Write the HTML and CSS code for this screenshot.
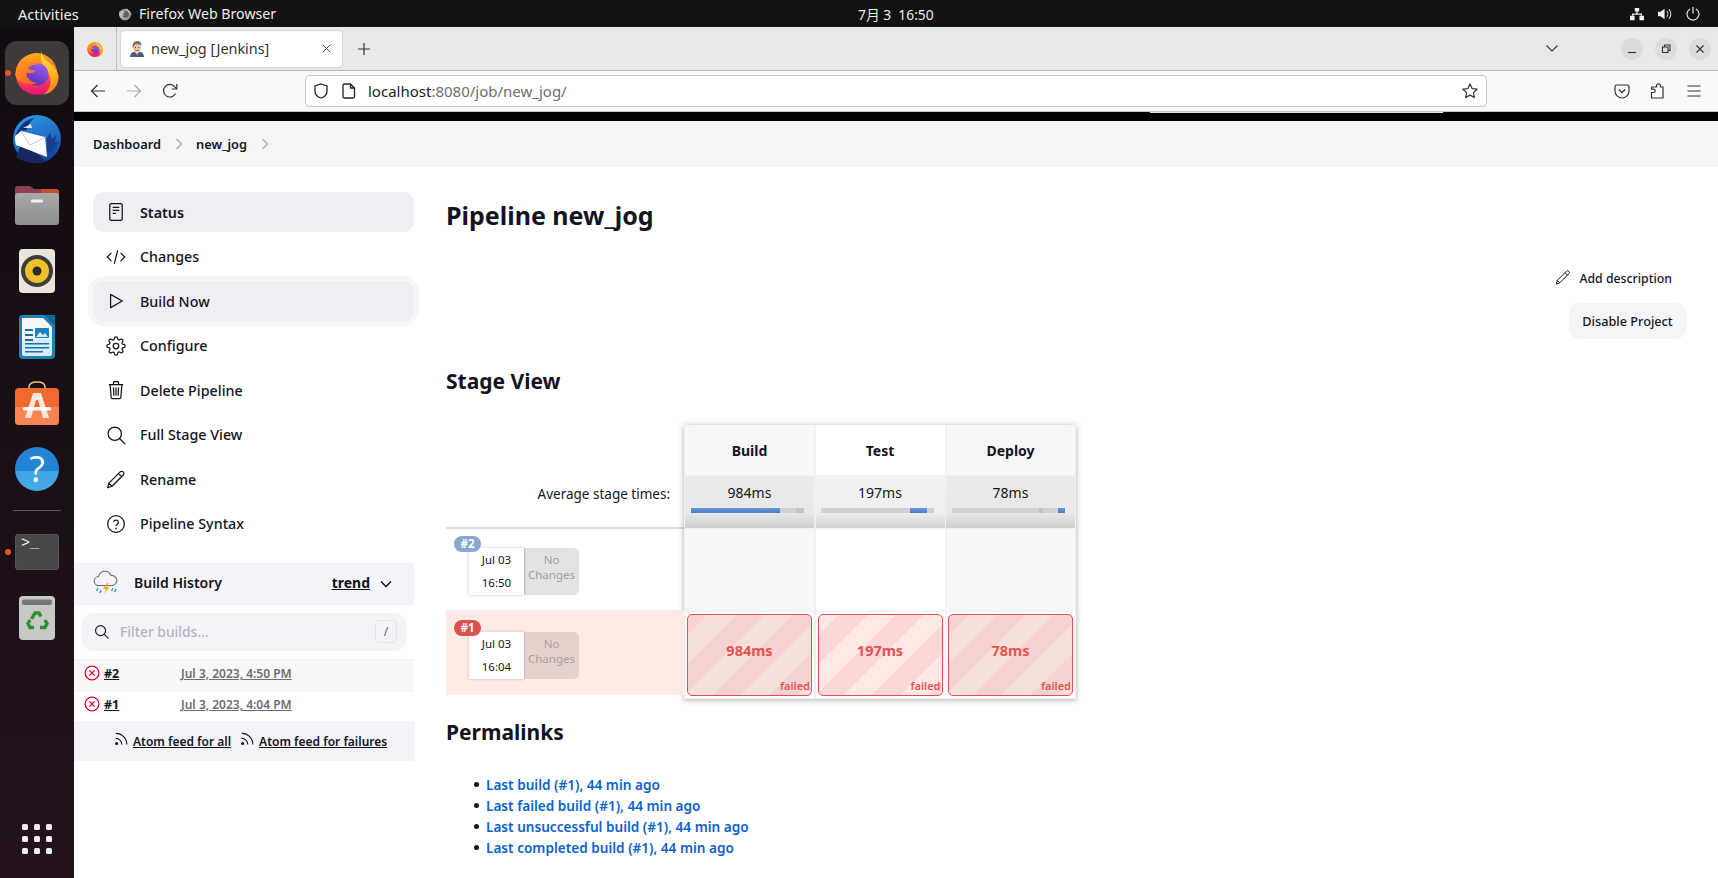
FILE: index.html
```html
<!DOCTYPE html>
<html lang="en">
<head>
<meta charset="utf-8">
<title>new_jog [Jenkins]</title>
<link rel="stylesheet" href="styles.css">
</head>
<body>
<svg class="defs" width="0" height="0" aria-hidden="true">
  <defs>
    <linearGradient id="ffBase" x1="0.45" y1="0" x2="0.55" y2="1">
      <stop offset="0" stop-color="#ffb01f"/><stop offset="0.45" stop-color="#ff6a2a"/><stop offset="0.75" stop-color="#f7305c"/><stop offset="1" stop-color="#e3127f"/>
    </linearGradient>
    <linearGradient id="ffGlobe" x1="0.7" y1="0" x2="0.3" y2="1"><stop offset="0" stop-color="#9a5cf0"/><stop offset="1" stop-color="#5a2fb8"/></linearGradient>
    <linearGradient id="ffTail" x1="0.3" y1="0" x2="0.6" y2="1"><stop offset="0" stop-color="#ffe03c"/><stop offset="0.6" stop-color="#ffb31f"/><stop offset="1" stop-color="#ff7a1f"/></linearGradient>
    <linearGradient id="ffHead" x1="0" y1="0" x2="0.6" y2="1"><stop offset="0" stop-color="#ffa21f"/><stop offset="1" stop-color="#ff6426"/></linearGradient>
    <linearGradient id="tbBlue" x1="0.3" y1="0" x2="0.7" y2="1"><stop offset="0" stop-color="#2a96e2"/><stop offset="0.65" stop-color="#1f62bf"/><stop offset="1" stop-color="#173a93"/></linearGradient>
    <linearGradient id="filesBody" x1="0" y1="0" x2="0" y2="1"><stop offset="0" stop-color="#a9a9a9"/><stop offset="1" stop-color="#8e8e8e"/></linearGradient>
    <symbol id="firefox" viewBox="0 0 48 48">
      <circle cx="23.500" cy="25" r="22.700" fill="url(#ffBase)"/>
      <path d="M29 0c0 6 4 10 9 13 6 5 10 11 9.500 17-1 10-9 17-17.500 17.500 8-3.500 11-13.500 7-22.500-3-7-11-11-8-25z" fill="url(#ffTail)"/>
      <circle cx="24.500" cy="25.500" r="12" fill="url(#ffGlobe)"/>
      <path d="M.8 24c0-6 2.700-12 7.700-16-.8 3 0 5 1.500 6.500 4-3.500 10-3 14 .5-4.500-.5-9 .5-11 3 2 2.500 6 3.500 10 3-3 3.500-7.500 4-11.500 2 .5 6 5.500 11 13 12.500-12 2-24-1-24.500-11.500z" fill="url(#ffHead)"/>
    </symbol>
    <symbol id="rss" viewBox="0 0 14 14">
      <circle cx="2.600" cy="11.400" r="1.500" fill="#14141f"/>
      <path d="M1.500 6.200a6.300 6.300 0 0 1 6.300 6.300M1.800 1.400a11 11 0 0 1 11 11.200" fill="none" stroke="#14141f" stroke-width="1.100"/>
    </symbol>
    <symbol id="err" viewBox="0 0 16 16">
      <circle cx="8" cy="8" r="6.900" fill="none" stroke="#e6001f" stroke-width="1.300"/>
      <path d="M5.400 5.400l5.200 5.200M10.600 5.400l-5.200 5.200" stroke="#e6001f" stroke-width="1.300" fill="none"/>
    </symbol>
  </defs>
</svg>

<header class="topbar">
  <span class="activities">Activities</span>
  <span class="appmenu">
    <svg class="ff-dim" viewBox="0 0 48 48"><circle cx="24" cy="26" r="20" fill="#9a9a9a"/><path d="M30 1c0 6 4 9 9 13 5 5 8 11 7 17-2-6-6-10-10-12-4-3-8-8-6-18z" fill="#c8c8c8"/><circle cx="26" cy="25" r="11" fill="#5c5c5c"/><path d="M4 24c0-5 1-9 3-12l2 5c2-4 6-5 9-5l-3 4c3-1 9 0 12 3-5 0-9 1-10 4 0 2 3 4 6 4-2 3-7 3-10 1 1 5 5 9 12 10-10 2-21-4-21-14z" fill="#bdbdbd"/></svg>
    <span class="appname">Firefox Web Browser</span>
  </span>
  <span class="clock">7月 3&nbsp;&nbsp;16:50</span>
  <span class="tray">
    <svg class="tray-ic" viewBox="0 0 16 14"><path d="M5.500 0h5v4.200h-5zM7.300 4.200h1.400v2.300h5v2.200h-1.400V7.900H3.700v.8H2.300V6.500h5zM0 9h5.200v5H0zM10.800 9H16v5h-5.200z" fill="#f2f2f2"/></svg>
    <svg class="tray-ic" viewBox="0 0 16 14"><path d="M0 4.500h3L7.500 1v12L3 9.500H0z" fill="#f2f2f2"/><path d="M10 3.800a4.600 4.600 0 0 1 0 6.400M12.600 1.800a7.600 7.600 0 0 1 0 10.400" fill="none" stroke="#d8d8d8" stroke-width="1.200"/></svg>
    <svg class="tray-ic" viewBox="0 0 14 14"><path d="M7 0v6.500M4 1.900a6 6 0 1 0 6 0" fill="none" stroke="#e8e8e8" stroke-width="1.200"/></svg>
  </span>
</header>

<div class="below">
  <nav class="dock">
    <div class="slot"><span class="tile"></span><span class="run-dot"></span>
      <svg class="ic-firefox"><use href="#firefox"/></svg></div>
    <div class="slot">
      <svg class="ic-48" viewBox="0 0 48 48">
        <circle cx="24" cy="24" r="24" fill="url(#tbBlue)"/>
        <path d="M3 42c8 6 20 7 29 4l-6-6L8 30z" fill="#16265f"/>
        <path d="M34 42l4-7 1 4 3-8 1 4 2-9-3 2 1-8-4 4-2-6-3 5z" fill="#14408f"/>
        <path d="M2 22C5 12 12 4 22 3c-5 3-8 8-8 12l-6 1-3 10z" fill="#11317d"/>
        <path d="M8 16l24 6 2 20L3 30c-1-3-1-6-1-9z" fill="#fff"/>
        <path d="M8 17l9 13 16-8" fill="none" stroke="#a7b4c6" stroke-width="0.800"/>
        <path d="M10 13l8-4 1 4z" fill="#dfe9f5"/>
        <circle cx="13" cy="14" r="1.300" fill="#26304a"/>
      </svg></div>
    <div class="slot">
      <svg class="ic-files" viewBox="0 0 44 40">
        <path d="M0 4a3 3 0 0 1 3-3h12l4 3h22a3 3 0 0 1 3 3v8H0z" fill="#8f3f55"/>
        <path d="M26 4h15a3 3 0 0 1 3 3v6H26z" fill="#c4532c"/>
        <rect y="8" width="44" height="32" rx="3" fill="url(#filesBody)"/>
        <rect x="16" y="14.500" width="12" height="3" rx="1" fill="#f2f2f2"/>
      </svg></div>
    <div class="slot">
      <svg class="ic-36" viewBox="0 0 36 44">
        <rect width="36" height="44" rx="4" fill="#e9e5da"/>
        <circle cx="18" cy="22" r="16" fill="#3f3d3c"/>
        <circle cx="18" cy="22" r="12" fill="#efc02a"/>
        <circle cx="18" cy="22" r="4.500" fill="#2b2a29"/>
      </svg></div>
    <div class="slot">
      <svg class="ic-36" viewBox="0 0 36 44">
        <path d="M4 0h22l10 10v30a4 4 0 0 1-4 4H4a4 4 0 0 1-4-4V4a4 4 0 0 1 4-4z" fill="#1a82b8"/>
        <path d="M3 3h21l9 9v12H3z" fill="#f5f5f5"/>
        <path d="M3 24h30v15a2 2 0 0 1-2 2H5a2 2 0 0 1-2-2z" fill="#d9ecf6"/>
        <path d="M26 0l10 10V0z" fill="#0f6a9a"/>
        <rect x="6" y="14" width="8" height="2" fill="#1672a8"/><rect x="6" y="19" width="8" height="2" fill="#1672a8"/><rect x="6" y="24" width="8" height="2" fill="#1672a8"/>
        <rect x="16" y="13" width="14" height="10" rx="1" fill="#1a82c4"/>
        <path d="M17 22l4-5 3 3 2-2 3 4z" fill="#d7ecf7"/>
        <rect x="6" y="28" width="24" height="1.500" fill="#1672a8"/><rect x="6" y="32" width="24" height="1.500" fill="#1672a8"/><rect x="6" y="36" width="18" height="1.500" fill="#1672a8"/>
      </svg></div>
    <div class="slot">
      <svg class="ic-software" viewBox="0 0 44 44">
        <path d="M14 9V6c0-3 3-5 8-5s8 2 8 5v3" fill="none" stroke="#e8c68a" stroke-width="1.500"/>
        <rect y="7" width="44" height="37" rx="4" fill="#f3682e"/>
        <path d="M0 26h44v14a4 4 0 0 1-4 4H4a4 4 0 0 1-4-4z" fill="#f78452"/>
        <path d="M10 37l8-25h8l8 25h-6l-5-18h-2l-5 18z" fill="#fbe8da"/>
        <rect x="8" y="26" width="28" height="3.500" rx="1.500" fill="#fff"/>
      </svg></div>
    <div class="slot"><span class="help">?</span></div>
    <div class="sep"></div>
    <div class="slot"><span class="run-dot"></span><span class="term">&gt;_</span></div>
    <div class="slot">
      <svg class="ic-36" viewBox="0 0 36 44">
        <rect width="36" height="44" rx="4" fill="#c8c8c6"/>
        <rect x="3" y="3.500" width="30" height="5.500" rx="2" fill="#777"/>
        <g fill="none" stroke="#2f8f2a" stroke-width="3.400">
          <path d="M12.500 23l3.500-6h4l2 3.500"/><path d="M26 24l2 3.500-2 4h-5"/><path d="M15 31.500h-4l-2-4 2-3.500"/>
        </g>
      </svg></div>
    <div class="apps">
      <i></i><i></i><i></i><i></i><i></i><i></i><i></i><i></i><i></i>
    </div>
  </nav>

  <div class="browser">
    <div class="tabbar">
      <div class="tab-home"><svg class="ic-ff-small"><use href="#firefox"/></svg></div>
      <div class="tab">
        <svg class="favicon" viewBox="0 0 16 16">
          <path d="M1 16c0-3 2-5 4-5h6c2 0 4 2 4 5z" fill="#4a5d78"/>
          <path d="M6 11l2 3 2-3z" fill="#f4f4f4"/><path d="M7.300 12l.7 2 .7-2z" fill="#c23b34"/>
          <ellipse cx="8" cy="6.500" rx="4.200" ry="5" fill="#eec3a2"/>
          <path d="M3.600 6c-.3-4 2-6 4.600-6s4.500 2 4.200 4.800C11 3.200 8 3 6 3.500 5 4 4.500 5 4.300 7z" fill="#77716b"/>
          <path d="M6 9.500h4" stroke="#8b5e4a" stroke-width=".8"/>
          <circle cx="6.500" cy="6.500" r=".6" fill="#333"/><circle cx="9.700" cy="6.500" r=".6" fill="#333"/>
        </svg>
        <span class="tab-title">new_jog [Jenkins]</span>
        <svg class="tab-x" viewBox="0 0 10 10"><path d="M1 1l8 8M9 1l-8 8" stroke="#444" stroke-width="1.100" fill="none"/></svg>
      </div>
      <svg class="tab-plus" viewBox="0 0 12 12"><path d="M6 0v12M0 6h12" stroke="#333" stroke-width="1.200" fill="none"/></svg>
      <svg class="tab-list" viewBox="0 0 12 7"><path d="M.5.500L6 6l5.500-5.500" stroke="#333" stroke-width="1.100" fill="none"/></svg>
      <div class="winbtns">
        <span class="winbtn"><svg viewBox="0 0 10 10"><path d="M1 8.500h8" stroke="#333" stroke-width="1.100"/></svg></span>
        <span class="winbtn"><svg viewBox="0 0 10 10"><path d="M1.500 3h5.500v5.500H1.500zM3.500 3V1h5.500v5.500H7" fill="none" stroke="#333" stroke-width="1.100"/></svg></span>
        <span class="winbtn"><svg viewBox="0 0 10 10"><path d="M1.500 1.500l7 7M8.500 1.500l-7 7" stroke="#333" stroke-width="1.200" fill="none"/></svg></span>
      </div>
    </div>
    <div class="navbar">
      <svg class="nav-ic" viewBox="0 0 16 16"><path d="M15 8H1.500M7.500 2L1.500 8l6 6" fill="none" stroke="#333" stroke-width="1.200"/></svg>
      <svg class="nav-ic" viewBox="0 0 16 16"><path d="M1 8h13.500M8.500 2l6 6-6 6" fill="none" stroke="#a8a8a8" stroke-width="1.200"/></svg>
      <svg class="nav-ic" viewBox="0 0 16 16"><path d="M13.500 10.500A6.300 6.300 0 1 1 12.800 3.800L14.500 5.500" fill="none" stroke="#333" stroke-width="1.200"/><path d="M14.800 1v5h-5" fill="none" stroke="#333" stroke-width="1.200"/></svg>
      <div class="urlbar">
        <svg class="url-shield" viewBox="0 0 16 16"><path d="M8 1l6 2v5c0 3.500-2.500 6-6 7-3.500-1-6-3.500-6-7V3z" fill="none" stroke="#222" stroke-width="1.300"/></svg>
        <svg class="url-page" viewBox="0 0 14 16"><path d="M2.500 1h6l4 4v8.500a1.500 1.500 0 0 1-1.500 1.500H2.500A1.500 1.500 0 0 1 1 13.500v-11A1.500 1.500 0 0 1 2.500 1zM8.500 1v4h4" fill="none" stroke="#222" stroke-width="1.300"/></svg>
        <span class="url-text">localhost<span class="url-rest">:8080/job/new_jog/</span></span>
        <svg class="url-star" viewBox="0 0 16 16"><path d="M8 1l2.100 4.600 5 .6-3.700 3.400 1 4.900L8 12.100l-4.400 2.400 1-4.900L.9 6.200l5-.6z" fill="none" stroke="#333" stroke-width="1.200" stroke-linejoin="round"/></svg>
      </div>
      <div class="nav-right">
        <svg class="nav-ic" viewBox="0 0 16 16"><path d="M2.500 2h11A1.500 1.500 0 0 1 15 3.500V8a7 7 0 0 1-14 0V3.500A1.500 1.500 0 0 1 2.500 2z" fill="none" stroke="#333" stroke-width="1.200"/><path d="M4.800 6.500L8 9.500l3.200-3" fill="none" stroke="#333" stroke-width="1.300"/></svg>
        <svg class="nav-ic" viewBox="0 0 16 16"><path d="M1.500 15V9.500h2a1.700 1.700 0 0 0 0-3.400h-2V4h5V2.800a2 2 0 0 1 4 0V4h2.500v11z" fill="none" stroke="#333" stroke-width="1.200" stroke-linejoin="round"/></svg>
        <svg class="nav-ic" viewBox="0 0 16 16"><path d="M1.500 3h13M1.500 8h13M1.500 13h13" stroke="#333" stroke-width="1.200" fill="none"/></svg>
      </div>
    </div>
    <div class="strip"><i></i></div>
    <div class="crumbs">
      <span>Dashboard</span>
      <svg class="crumb-sep" viewBox="0 0 8 12"><path d="M1.500 1l5 5-5 5" fill="none" stroke="#a8a8b4" stroke-width="1.200"/></svg>
      <span>new_jog</span>
      <svg class="crumb-sep" viewBox="0 0 8 12"><path d="M1.500 1l5 5-5 5" fill="none" stroke="#a8a8b4" stroke-width="1.200"/></svg>
    </div>

    <div class="page">
      <aside class="side">
        <ul class="tasks">
          <li class="task is-current">
            <svg class="task-ic" viewBox="0 0 24 24"><rect x="4.500" y="2" width="15" height="20" rx="2" fill="none" stroke="#14141f" stroke-width="1.500"/><path d="M8 6.500h8M8 10h8M8 13.500h4" stroke="#14141f" stroke-width="1.500" fill="none"/></svg>
            <span>Status</span></li>
          <li class="task">
            <svg class="task-ic" viewBox="0 0 24 24"><path d="M6.500 7L1.500 12l5 5M17.500 7l5 5-5 5M14 4l-4 16" fill="none" stroke="#14141f" stroke-width="1.500"/></svg>
            <span>Changes</span></li>
          <li class="task is-hover">
            <svg class="task-ic" viewBox="0 0 24 24"><path d="M5.500 4l14 8-14 8z" fill="none" stroke="#14141f" stroke-width="1.500" stroke-linejoin="round"/></svg>
            <span>Build Now</span></li>
          <li class="task">
            <svg class="task-ic" viewBox="0 0 24 24"><circle cx="12" cy="12" r="3.300" fill="none" stroke="#14141f" stroke-width="1.500"/><path d="M19.400 15a1.650 1.650 0 0 0 .33 1.820l.06.06a2 2 0 0 1 0 2.830 2 2 0 0 1-2.830 0l-.06-.06a1.650 1.650 0 0 0-1.820-.33 1.650 1.650 0 0 0-1 1.510V21a2 2 0 0 1-2 2 2 2 0 0 1-2-2v-.09A1.650 1.650 0 0 0 9 19.400a1.650 1.650 0 0 0-1.820.33l-.06.06a2 2 0 0 1-2.830 0 2 2 0 0 1 0-2.830l.06-.06a1.650 1.650 0 0 0 .33-1.820 1.650 1.650 0 0 0-1.510-1H3a2 2 0 0 1-2-2 2 2 0 0 1 2-2h.09A1.650 1.650 0 0 0 4.600 9a1.650 1.650 0 0 0-.33-1.820l-.06-.06a2 2 0 0 1 0-2.830 2 2 0 0 1 2.830 0l.06.06a1.650 1.650 0 0 0 1.820.33H9a1.650 1.650 0 0 0 1-1.510V3a2 2 0 0 1 2-2 2 2 0 0 1 2 2v.09a1.650 1.650 0 0 0 1 1.510 1.650 1.650 0 0 0 1.820-.33l.06-.06a2 2 0 0 1 2.830 0 2 2 0 0 1 0 2.830l-.06.06a1.650 1.650 0 0 0-.33 1.820V9a1.650 1.650 0 0 0 1.510 1H21a2 2 0 0 1 2 2 2 2 0 0 1-2 2h-.09a1.650 1.650 0 0 0-1.510 1z" fill="none" stroke="#14141f" stroke-width="1.500"/></svg>
            <span>Configure</span></li>
          <li class="task">
            <svg class="task-ic" viewBox="0 0 24 24"><path d="M5 6l1.200 15a1.500 1.500 0 0 0 1.500 1.300h8.600a1.500 1.500 0 0 0 1.500-1.300L19 6M3.500 5.500h17M9 5.500V3a1 1 0 0 1 1-1h4a1 1 0 0 1 1 1v2.500M9 9l.4 10M12 9v10M15 9l-.4 10" fill="none" stroke="#14141f" stroke-width="1.500"/></svg>
            <span>Delete Pipeline</span></li>
          <li class="task">
            <svg class="task-ic" viewBox="0 0 24 24"><circle cx="10.500" cy="10.500" r="8" fill="none" stroke="#14141f" stroke-width="1.500"/><path d="M16.500 16.500L23 23" stroke="#14141f" stroke-width="1.500" fill="none"/></svg>
            <span>Full Stage View</span></li>
          <li class="task">
            <svg class="task-ic" viewBox="0 0 24 24"><path d="M2 22.500l1.500-5.500L17 3.500a2.600 2.600 0 0 1 3.700 0 2.600 2.600 0 0 1 0 3.700L7.200 20.700zM15 5.500l3.700 3.700M3.500 17l3.700 3.700" fill="none" stroke="#14141f" stroke-width="1.500" stroke-linejoin="round"/></svg>
            <span>Rename</span></li>
          <li class="task">
            <svg class="task-ic" viewBox="0 0 24 24"><circle cx="12" cy="12" r="10" fill="none" stroke="#14141f" stroke-width="1.500"/><path d="M9.100 9.300a3 3 0 0 1 5.800 .8c0 2-2.900 2.300-2.900 4.200" fill="none" stroke="#14141f" stroke-width="1.500"/><circle cx="12" cy="17.300" r="1" fill="#14141f"/></svg>
            <span>Pipeline Syntax</span></li>
        </ul>

        <div class="history">
          <div class="hist-head">
            <svg class="hist-weather" viewBox="0 0 26 26">
              <path d="M6 15.500a4.500 4.500 0 0 1-.5-9 6.500 6.500 0 0 1 12.500-1 5 5 0 0 1 1.500 10z" fill="#f4f4f8" stroke="#666c78" stroke-width="1.100"/>
              <path d="M14 13l-4 6h3l-1.500 5 5-7h-3l2-4z" fill="#f7a81b"/>
              <path d="M5 18l-1.500 3M8 20l-1 3M20 18l-1.500 3M23 19l-1.500 3" stroke="#3b9ad9" stroke-width="1.500" fill="none"/>
            </svg>
            <span class="hist-title">Build History</span>
            <span class="hist-trend">trend</span>
            <svg class="hist-chev" viewBox="0 0 12 8"><path d="M1 1.500l5 5 5-5" fill="none" stroke="#14141f" stroke-width="1.400"/></svg>
          </div>
          <div class="filter">
            <svg class="filter-ic" viewBox="0 0 24 24"><circle cx="10.500" cy="10.500" r="8" fill="none" stroke="#14141f" stroke-width="1.800"/><path d="M16.500 16.500L23 23" stroke="#14141f" stroke-width="1.800" fill="none"/></svg>
            <span class="filter-text">Filter builds...</span>
            <span class="filter-key">/</span>
          </div>
          <div class="hist-row hist-row-alt">
            <svg class="err-ic"><use href="#err"/></svg>
            <a class="hist-num">#2</a><a class="hist-date">Jul 3, 2023, 4:50 PM</a>
          </div>
          <div class="hist-row">
            <svg class="err-ic"><use href="#err"/></svg>
            <a class="hist-num">#1</a><a class="hist-date">Jul 3, 2023, 4:04 PM</a>
          </div>
          <div class="feeds">
            <svg class="rss-ic"><use href="#rss"/></svg><a class="feed-link">Atom feed for all</a>
            <svg class="rss-ic rss-second"><use href="#rss"/></svg><a class="feed-link">Atom feed for failures</a>
          </div>
        </div>
      </aside>

      <main class="content">
        <h1 class="title">Pipeline new_jog</h1>
        <div class="actions">
          <div class="add-desc">
            <svg class="add-ic" viewBox="0 0 24 24"><path d="M2 22.500l1.500-5.500L17 3.500a2.600 2.600 0 0 1 3.700 0 2.600 2.600 0 0 1 0 3.700L7.200 20.700zM15 5.500l3.700 3.700M3.500 17l3.700 3.700" fill="none" stroke="#14141f" stroke-width="1.500" stroke-linejoin="round"/></svg>
            <span>Add description</span>
          </div>
          <button class="disable">Disable Project</button>
        </div>
        <h2 class="h-stage">Stage View</h2>
        <div class="stage">
          <div class="stage-left">
            <div class="avg-label">Average stage times:</div>
            <div class="build-row">
              <span class="pill">#2</span>
              <div class="meta"><div class="meta-date">Jul 03<br>16:50</div><div class="meta-chg">No<br>Changes</div></div>
            </div>
            <div class="build-row is-failed">
              <span class="pill pill-red">#1</span>
              <div class="meta"><div class="meta-date">Jul 03<br>16:04</div><div class="meta-chg">No<br>Changes</div></div>
            </div>
          </div>
          <div class="stage-box">
            <div class="head c-grey">Build</div>
            <div class="head">Test</div>
            <div class="head c-grey">Deploy</div>

            <div class="avg avg-a">984ms
              <div class="bar bar-build"><i class="bar-fill" style="margin-left:0;width:89px"></i></div></div>
            <div class="avg avg-b">197ms
              <div class="bar"><i class="bar-fill" style="margin-left:89px;width:17px"></i></div></div>
            <div class="avg avg-a">78ms
              <div class="bar bar-deploy"><i class="bar-fill" style="margin-left:106px;width:7px"></i></div></div>

            <div class="empty c-grey"></div>
            <div class="empty"></div>
            <div class="empty c-grey"></div>

            <div class="cellwrap"><div class="fail fail-a">984ms<span class="fail-tag">failed</span></div></div>
            <div class="cellwrap"><div class="fail fail-b">197ms<span class="fail-tag">failed</span></div></div>
            <div class="cellwrap"><div class="fail fail-a">78ms<span class="fail-tag">failed</span></div></div>
          </div>
        </div>
        <h2 class="h-perma">Permalinks</h2>
        <ul class="perma">
          <li><a>Last build (#1), 44 min ago</a></li>
          <li><a>Last failed build (#1), 44 min ago</a></li>
          <li><a>Last unsuccessful build (#1), 44 min ago</a></li>
          <li><a>Last completed build (#1), 44 min ago</a></li>
        </ul>
      </main>
    </div>
  </div>
</div>
</body>
</html>
```

FILE: styles.css
```css
* { box-sizing: border-box; }
html, body { margin: 0; height: 100%; overflow: hidden; }
body {
  width: 1718px; height: 878px; display: flex; flex-direction: column;
  font-family: "Noto Sans", "Noto Sans CJK SC", sans-serif; color: #14141f; background: #fff;
}
.defs { position: absolute; }
ul { list-style: none; margin: 0; padding: 0; }

/* top bar */
.topbar {
  height: 27px; flex: none; background: #121212; color: #ececec; font-size: 14.600px;
  display: flex; align-items: center; position: relative;
}
.activities { margin-left: 18px; width: 100px; }
.appmenu { display: flex; align-items: center; gap: 7px; }
.appname { font-size: 14.200px; }
.ff-dim { width: 14px; height: 14px; }
.clock { position: absolute; left: 858px; top: 6px; font-size: 13.800px; line-height: 18px; }
.tray { margin-left: auto; display: flex; gap: 14px; padding-right: 18px; }
.tray-ic { width: 14px; height: 14px; display: block; }

/* dock */
.below { flex: 1; display: flex; min-height: 0; }
.dock {
  width: 74px; flex: none; padding-top: 13px; display: flex; flex-direction: column; align-items: center;
  background: linear-gradient(180deg, #130b12 0%, #1a0f17 50%, #23121c 100%);
}
.slot { height: 66px; width: 74px; flex: none; display: flex; align-items: center; justify-content: center; position: relative; }
.tile { position: absolute; left: 5px; top: 1px; width: 64px; height: 64px; border-radius: 12px; background: #3f393c; }
.run-dot { position: absolute; left: 5px; top: 30px; width: 6px; height: 6px; border-radius: 50%; background: #e95420; }
.ic-firefox { width: 44px; height: 44px; position: relative; }
.ic-48 { width: 48px; height: 48px; }
.ic-files { width: 44px; height: 40px; }
.ic-36 { width: 36px; height: 44px; }
.ic-software { width: 44px; height: 44px; }
.help {
  width: 44px; height: 44px; border-radius: 50%; background: linear-gradient(180deg, #2583d4 0%, #2583d4 55%, #3fa4e4 55%, #45aae8 100%);
  color: #fff; font-size: 36px; font-weight: 400; line-height: 44px; text-align: center; font-family: "Open Sans", sans-serif;
}
.sep { width: 48px; height: 17px; flex: none; display: flex; align-items: center; }
.sep::before { content: ""; width: 100%; height: 1px; background: #5c5459; }
.term {
  width: 44px; height: 36px; border-radius: 4px; background: #474747; box-shadow: inset 0 0 0 1px #555;
  color: #f2f2f2; font: 15px/16px "Liberation Mono", monospace; padding: 2px 0 0 6px;
}
.apps { margin-top: auto; margin-bottom: 24px; display: grid; grid-template-columns: repeat(3, 6px); gap: 6px; }
.apps i { width: 6px; height: 6px; border-radius: 1.500px; background: #eee; }

/* browser chrome */
.browser { flex: 1; display: flex; flex-direction: column; min-width: 0; }
.tabbar { height: 44px; flex: none; background: #e9e9e9; border-bottom: 1px solid #b9b9b9; display: flex; align-items: center; }
.tab-home { width: 43px; height: 43px; border-right: 1px solid #bdbdbd; display: flex; align-items: center; justify-content: center; }
.ic-ff-small { width: 16px; height: 16px; }
.tab {
  width: 221px; height: 36px; margin-left: 4px; background: #fff; border-radius: 4px; box-shadow: 0 0 2px rgba(0,0,0,.25);
  display: flex; align-items: center; padding: 0 11px 0 8px;
}
.favicon { width: 16px; height: 16px; flex: none; }
.tab-title { margin-left: 6px; font-size: 14.400px; color: #333; }
.tab-x { width: 9px; height: 9px; margin-left: auto; }
.tab-plus { width: 12px; height: 12px; margin-left: 16px; }
.tab-list { width: 12px; height: 7px; margin-left: auto; }
.winbtns { display: flex; gap: 12px; margin-left: 63px; margin-right: 7px; }
.winbtn { width: 22px; height: 22px; border-radius: 50%; background: #dcdcdc; display: flex; align-items: center; justify-content: center; }
.winbtn svg { width: 10px; height: 10px; }

.navbar { height: 41px; flex: none; background: #f9f9f9; border-bottom: 1px solid #c6c6c6; display: flex; align-items: center; padding-left: 16px; gap: 20px; }
.nav-ic { width: 16px; height: 16px; flex: none; }
.urlbar {
  width: 1182px; height: 32px; flex: none; margin-left: 107px; background: #fff; border: 1px solid #c8c8c8; border-radius: 4px;
  display: flex; align-items: center; padding: 0 8px 0 7px;
}
.url-shield { width: 16px; height: 16px; flex: none; }
.url-page { width: 14px; height: 16px; flex: none; margin-left: 13px; }
.url-text { margin-left: 12px; font-size: 15px; color: #222; }
.url-rest { color: #6e6e6e; }
.url-star { width: 16px; height: 16px; margin-left: auto; }
.nav-right { display: flex; gap: 20px; margin-left: 107px; flex: none; }
.strip { height: 9px; flex: none; background: #000; }
.strip i { display: block; width: 293px; height: 1px; margin-left: 1076px; background: #e4e4e4; }
.crumbs {
  height: 46px; flex: none; background: #f5f5f8; display: flex; align-items: center; padding-left: 19px;
  font-size: 12.800px; font-weight: 600;
}
.crumb-sep { width: 8px; height: 12px; margin: 0 13.500px; }

/* page */
.page { flex: 1; display: flex; min-height: 0; }
.side { width: 340px; flex: none; padding-top: 25px; }
.tasks { display: flex; flex-direction: column; gap: 4.550px; padding-left: 19px; }
.task { height: 40px; border-radius: 11px; display: flex; align-items: center; padding-left: 13px; font-size: 14.300px; font-weight: 500; }
.task-ic { width: 20px; height: 20px; margin-right: 14px; flex: none; }
.task.is-current { background: #eeeef3; font-weight: 600; }
.task.is-hover { background: #eeeef3; box-shadow: 0 0 0 5px #f6f6f9; }

.history { margin-top: 19px; }
.hist-head { height: 42px; background: #f3f3f8; display: flex; align-items: center; padding: 0 0 2px 19px; font-size: 14px; font-weight: 600; }
.hist-weather { width: 26px; height: 26px; }
.hist-title { margin-left: 15px; }
.hist-trend { margin-left: auto; text-decoration: underline; font-weight: 700; }
.hist-chev { width: 12px; height: 8px; margin: 2px 22px 0 10px; }
.filter {
  height: 38px; margin: 8px; background: #f3f3f8; border-radius: 12px; display: flex; align-items: center; padding: 0 9px 0 12px;
}
.filter-ic { width: 15px; height: 15px; }
.filter-text { margin-left: 11px; color: #b3b3c2; font-size: 13.800px; font-weight: 500; }
.filter-key { margin-left: auto; width: 22px; height: 23px; border: 1px solid #e3e3ea; border-radius: 4px; font-size: 12px; color: #666; text-align: center; line-height: 21px; }
.hist-row { height: 30px; display: flex; align-items: center; padding: 0 0 4px 10px; font-size: 12px; font-weight: 700; border-bottom: 1px solid #f4f4f4; }
.hist-row-alt { height: 33px; background: #f8f8f8; border-top: 1px solid #f2f2f2; }
.err-ic { width: 16px; height: 16px; flex: none; }
.hist-num { margin-left: 4px; width: 77px; text-decoration: underline; font-size: 12.500px; }
.hist-date { color: #6d6d7a; text-decoration: underline; font-weight: 600; }
.feeds { height: 39px; background: #f3f3f8; display: flex; align-items: center; padding-left: 40px; font-size: 12px; font-weight: 600; }
.rss-ic { width: 14px; height: 14px; margin-right: 5px; flex: none; margin-top: -4px; }
.rss-second { margin-left: 9px; }
.feed-link { text-decoration: underline; }

.content { flex: 1; padding: 0 32px; min-width: 0; }
.title { margin: 31px 0 0; font-size: 25px; line-height: 34px; font-weight: 700; }
.actions { margin-top: 36px; display: flex; flex-direction: column; align-items: flex-end; }
.add-desc { display: flex; align-items: center; height: 20px; font-size: 12.300px; font-weight: 500; padding-right: 14px; }
.add-ic { width: 16px; height: 16px; margin-right: 8px; margin-top: -3px; }
.disable {
  margin-top: 15px; width: 117px; height: 36px; border: 0; border-radius: 10px; background: #f5f5f8; color: #14141f;
  font: 500 12.700px "Noto Sans", sans-serif; padding: 0;
}
.h-stage { margin: 28px 0 0; font-size: 21px; line-height: 28px; font-weight: 700; }
.stage { margin-top: 30px; display: flex; height: 274px; }
.stage-left { width: 238px; flex: none; }
.avg-label { height: 104px; padding: 60px 14px 0 0; text-align: right; font-size: 13.500px; line-height: 18px; border-bottom: 2px solid #dedede; }
.build-row { height: 83px; border-bottom: 2px solid #eee; position: relative; padding: 19px 0 0 23px; }
.build-row.is-failed { background: #ffeae6; border-bottom: 0; padding-top: 20px; }
.pill {
  position: absolute; left: 8px; top: 7px; width: 27px; height: 16px; border-radius: 8px; background: #86a9d2; color: #fff;
  font-size: 11.500px; font-weight: 700; line-height: 16px; text-align: center; z-index: 1;
}
.pill-red { background: #d9534f; top: 8px; }
.meta { display: flex; width: 110px; height: 47px; }
.meta-date { width: 55px; background: #fff; box-shadow: 0 0 3px rgba(0,0,0,.22); text-align: center; font-size: 11.500px; line-height: 23px; }
.meta-chg { width: 55px; background: rgba(0,0,0,.11); border-radius: 0 5px 5px 0; color: #a0a0a0; text-align: center; font-size: 11.500px; line-height: 15px; padding-top: 4px; box-shadow: inset 1px 0 1px rgba(0,0,0,.1); }
.is-failed .meta-chg { background: #e6d1cc; color: #a89f9c; }

.stage-box {
  width: 392px; height: 274px; flex: none; padding: 0 1px; background: #f0f0f0;
  display: grid; grid-template-columns: repeat(3, 129px); column-gap: 1.500px; grid-template-rows: 50px 52px 82px 86px; row-gap: 1px;
  box-shadow: 0 1px 6px rgba(0,0,0,.32);
}
.head { background: #fff; display: flex; align-items: center; justify-content: center; font-size: 14px; font-weight: 700; }
.avg { text-align: center; font-size: 14px; line-height: 20px; padding-top: 7px; }
.avg-a { background: linear-gradient(180deg, #eaeaea 0%, #e9e9e9 70%, #cfcfcf 100%); }
.avg-b { background: linear-gradient(180deg, #f1f1f1 0%, #efefef 70%, #d2d2d2 100%); }
.bar { width: 113px; height: 5px; margin: 5px 0 0 5.500px; background: #d2d2d2; }
.bar-build { background: linear-gradient(90deg, #d2d2d2 105px, #c3c3c3 105px 113px); }
.bar-deploy { background: linear-gradient(90deg, #d2d2d2 87px, #c3c3c3 87px 91px, #d2d2d2 91px); }
.bar-fill { display: block; height: 5px; background: linear-gradient(180deg, #6c97dc, #4f7cc6); }
.empty { background: #fff; }
.c-grey { background: #f7f7f7; }
.cellwrap { background: #fff; padding: 2px 2px 1px; }
.fail {
  height: 82px; border: 1px solid #e0504f; border-radius: 5px; position: relative; color: #e2544f;
  font-size: 14.500px; font-weight: 700; line-height: 16px; text-align: center; padding-top: 27px;
}
.fail-a { background: repeating-linear-gradient(135deg, #f7d2d2 -6px 14px, #f6e0db 14px 34px); }
.fail-b { background: repeating-linear-gradient(135deg, #fee9e4 -6px 14px, #fdd7d7 14px 34px); }
.fail-tag { position: absolute; right: 1px; bottom: 2px; font-size: 11px; line-height: 14px; font-weight: 600; }

.h-perma { margin: 19px 0 0; font-size: 21px; line-height: 28px; font-weight: 700; }
.perma { margin-top: 28px; padding-left: 28px; font-size: 13.600px; line-height: 21px; font-weight: 600; color: #0b63ce; }
.perma li { display: flex; align-items: center; }
.perma li::before { content: ""; width: 5px; height: 5px; margin-right: 7px; border-radius: 50%; background: #14141f; flex: none; }
```
